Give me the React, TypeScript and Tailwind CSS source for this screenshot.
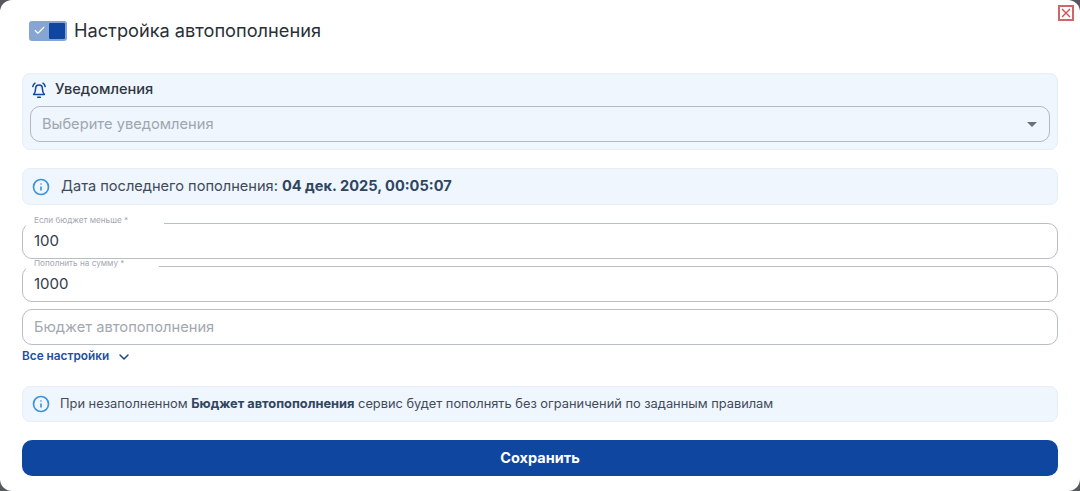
import { ChevronDown, Check, Info } from 'lucide-react'

function NotchedField({ label, value, notch }: { label: string; value: string; notch: string }) {
  return (
    <div className="relative h-9 rounded-[10px] border border-[#b9bdc4] bg-white pl-[11px] flex items-center text-[15px] text-[#333b47]">
      <span className={`absolute -top-[8px] left-[3px] ${notch} h-[13px] bg-white pl-[8px] text-[8.2px] leading-[9px] text-[#a3a8b0] whitespace-nowrap`}>
        {label} *
      </span>
      {value}
    </div>
  )
}

function InfoBar({ children, className }: { children: React.ReactNode; className: string }) {
  return (
    <div className={`${className} rounded-lg border border-[#e6eef7] bg-[#eff6fd] pl-[9px] flex items-center text-[#3f4a5a]`}>
      <Info size={18} strokeWidth={2.2} className="text-[#3b93e0] shrink-0" />
      <p>{children}</p>
    </div>
  )
}

export default function App() {
  return (
    <div className="h-[491px] bg-[#55585d] font-['Inter',sans-serif]">
      <div className="relative h-full rounded-[12px] bg-white px-[22px] pt-[20px]">
        <button className="absolute right-[6px] top-[5px] w-[16px] h-[16px] border-2 border-[#d0666a] flex items-center justify-center">
          <svg width="10" height="10" viewBox="0 0 10 10" fill="none" stroke="#cf4f54" strokeWidth="1.4">
            <path d="M1 1l8 8M9 1l-8 8" />
          </svg>
        </button>

        <div className="flex items-center gap-[7px] pl-[7px] h-[21px]">
          <div className="w-[38px] h-[20px] rounded-[3px] bg-[#87a5d2] flex items-center justify-between pl-[4px] pr-[2px]">
            <Check size={13} strokeWidth={2.2} className="text-white" />
            <div className="w-[16px] h-[16px] rounded-[1px] bg-[#0f469f]" />
          </div>
          <h1 className="text-[18.2px] font-normal text-[#2a2f36]">Настройка автопополнения</h1>
        </div>

        <div className="mt-[32px] h-[77px] rounded-lg border border-[#e6eef7] bg-[#eff6fd] px-[7px] pt-[6px]">
          <div className="flex items-center gap-[8px] pl-[1px] h-[20px] text-[14.6px] font-medium text-[#2f3640]">
            <svg width="16" height="17" viewBox="0 0 16 17" fill="none" stroke="#0f469f" strokeWidth="1.5" strokeLinecap="round" strokeLinejoin="round">
              <path d="M8 3c-2.1 0-3.4 1.6-3.4 3.7 0 2.9-.8 4.4-2 5.8h10.8c-1.2-1.4-2-2.9-2-5.8C11.4 4.6 10.1 3 8 3z" />
              <path d="M6.7 15.2h2.6" />
              <path d="M4 1.2C2.9 2 2.1 3.1 1.8 4.6M12 1.2c1.1.8 1.9 1.9 2.2 3.4" />
            </svg>
            Уведомления
          </div>
          <div className="mt-[6px] h-9 rounded-[10px] border border-[#b4b9c1] flex items-center justify-between pl-[11px] pr-[12px] pt-[1px] text-[14.7px] text-[#a0a6af]">
            Выберите уведомления
            <span className="w-0 h-0 border-x-[5px] border-x-transparent border-t-[5px] border-t-[#6b7078]" />
          </div>
        </div>

        <div className="mt-[18px]">
          <InfoBar className="h-[37px] gap-[11px] text-[14.6px]">
            Дата последнего пополнения: <b className="font-bold text-[#2f4560]">04 дек. 2025, 00:05:07</b>
          </InfoBar>
        </div>

        <div className="mt-[18px] flex flex-col gap-[7px]">
          <NotchedField label="Если бюджет меньше" value="100" notch="w-[138px]" />
          <NotchedField label="Пополнить на сумму" value="1000" notch="w-[133px]" />
          <div className="h-9 rounded-[10px] border border-[#b9bdc4] pl-[11px] flex items-center text-[14.7px] text-[#a3a8b0]">
            Бюджет автопополнения
          </div>
        </div>

        <div className="mt-[4px] h-[15px] flex items-center gap-[7px] text-[11.8px] font-semibold text-[#1d4f9c]">
          Все настройки
          <ChevronDown size={16} strokeWidth={2.2} className="text-[#1a4380]" />
        </div>

        <div className="mt-[22px]">
          <InfoBar className="h-[36px] gap-[10px] text-[12.83px]">
            При незаполненном <b className="font-bold text-[#2f4560]">Бюджет автопополнения</b> сервис будет пополнять без ограничений по заданным правилам
          </InfoBar>
        </div>

        <button className="mt-[18px] w-full h-9 rounded-[10px] bg-[#0f469f] pb-[1px] text-white text-[14.5px] font-bold">
          Сохранить
        </button>
      </div>
    </div>
  )
}
